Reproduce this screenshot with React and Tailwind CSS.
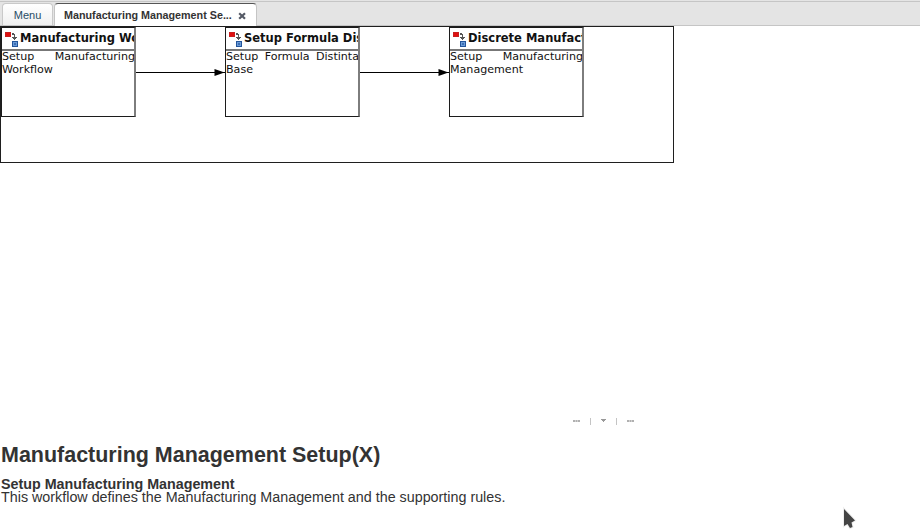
const NODES = [
  { title: 'Manufacturing Workflow', text: 'Setup Manufacturing Workflow' },
  { title: 'Setup Formula Distinta Base', text: 'Setup Formula Distinta Base' },
  { title: 'Discrete Manufacturing', text: 'Setup Manufacturing Management' },
];

function WorkflowIcon() {
  return (
    <svg className="mr-[2px] h-4 w-[14px] shrink-0" viewBox="0 0 14 16" shapeRendering="crispEdges">
      <rect x="1" y="1" width="6" height="5" fill="#c81e1e" />
      <rect x="2" y="2" width="4" height="3" fill="#e01010" />
      <path d="M8 2h2v1h1v3h-1v-2h-2z" fill="#555" />
      <path d="M8 6h5v1h-1v1h-1v1h-1v-1h-1v-1h-1z" fill="#555" />
      <rect x="8" y="10" width="6" height="6" fill="#23559b" />
      <rect x="9" y="11" width="4" height="4" fill="#6b9bd8" />
      <rect x="10" y="12" width="2" height="2" fill="#3c6fb4" />
    </svg>
  );
}

function Node({ title, text }) {
  return (
    <div className="h-[90px] w-[135px] shrink-0 overflow-hidden border border-r-2 border-[#1c1c1c] border-r-[#7d7d7d] bg-white font-['DejaVu_Sans',sans-serif] text-[#111]">
      <div className="flex h-[23px] items-center overflow-hidden border-b-2 border-[#777] pl-[2px]">
        <WorkflowIcon />
        <span className="whitespace-nowrap text-[11.500px] font-bold leading-[21px]">{title}</span>
      </div>
      <p className="-mr-px -mt-px text-justify text-[11.100px] leading-[13px]">{text}</p>
    </div>
  );
}

function Arrow() {
  return (
    <svg className="mt-[41px] h-[9px] w-[89px] shrink-0" viewBox="0 0 89 9">
      <path d="M0 4.500H89" stroke="#000" />
      <path d="M78.500 1L88.500 4.500L78.500 8z" fill="#000" />
    </svg>
  );
}

function Splitter() {
  return (
    <div className="ml-[573px] flex h-[9px] items-center">
      <svg className="h-[9px] w-[62px]" viewBox="0 0 62 9" shapeRendering="crispEdges">
        <path d="M0 3h7v2H0zM54 3h7v2h-7z" fill="#d0d0d0" />
        <path d="M0 3h2v2H0zM3 3h1v2H3zM5 3h2v2H5zM54 3h2v2h-2zM57 3h1v2h-1zM59 3h2v2h-2z" fill="#b0b0b0" />
        <path d="M17 1h1v7h-1zM43 1h1v7h-1z" fill="#c4c4c4" />
        <path d="M28 2h5v1h-5zM29 3h3v1h-3zM30 4h1v1h-1z" fill="#999" />
      </svg>
    </div>
  );
}

export default function App() {
  return (
    <div className="flex h-[532px] w-[920px] flex-col overflow-hidden bg-white font-['Liberation_Sans',Arial,sans-serif] text-[#333]">
      <div className="h-[2px] shrink-0 border-b border-[#c5c5c5] bg-[#e4e4e4]" />
      <div className="flex h-[24px] shrink-0 items-end border-b border-[#c5c5c5] bg-[#e4e4e4] pl-[2px]">
        <div className="flex h-[22px] w-[51px] items-center justify-center rounded-t-[4px] border border-b-0 border-[#c9c9c9] bg-gradient-to-b from-white to-[#f0f0f0] pt-px text-[11px] text-[#274d66]">
          Menu
        </div>
        <div className="-mb-px ml-px flex h-[23px] w-[203px] items-center rounded-t-[4px] border border-b-0 border-[#c5c5c5] border-t-[#555] bg-white pl-[9px] text-[10.750px] font-bold">
          <span className="whitespace-nowrap">Manufacturing Management Se...</span>
          <svg className="ml-[6px] mt-px h-[8px] w-[8px]" viewBox="0 0 8 8">
            <path d="M1.200 1.200L7 6.800M7 1.200L1.200 6.800" stroke="#555a66" strokeWidth="2.200" />
          </svg>
        </div>
      </div>

      <div className="flex h-[137px] w-[674px] shrink-0 items-start border border-[#1f1f1f]">
        <Node {...NODES[0]} />
        <Arrow />
        <Node {...NODES[1]} />
        <Arrow />
        <Node {...NODES[2]} />
      </div>

      <div className="mt-[254px] shrink-0">
        <Splitter />
      </div>

      <div className="mt-[16px] flex shrink-0 pl-px">
        <div>
          <h1 className="whitespace-nowrap text-[21.480px] font-bold leading-[26px]">Manufacturing Management Setup(X)</h1>
          <h2 className="mt-[10px] whitespace-nowrap text-[14.300px] font-bold leading-[13px]">Setup Manufacturing Management</h2>
          <p className="whitespace-nowrap text-[14.320px] leading-[13px]">This workflow defines the Manufacturing Management and the supporting rules.</p>
        </div>
      </div>

      <svg className="absolute left-[841px] top-[506px] h-[25px] w-[17px]" viewBox="0 0 17 25">
        <path d="M3 3V20L6.500 18L9 22L11.500 21L10.500 16.500L14 14.500z" fill="#444" stroke="#eee" strokeWidth="2" paintOrder="stroke" />
      </svg>
    </div>
  );
}
